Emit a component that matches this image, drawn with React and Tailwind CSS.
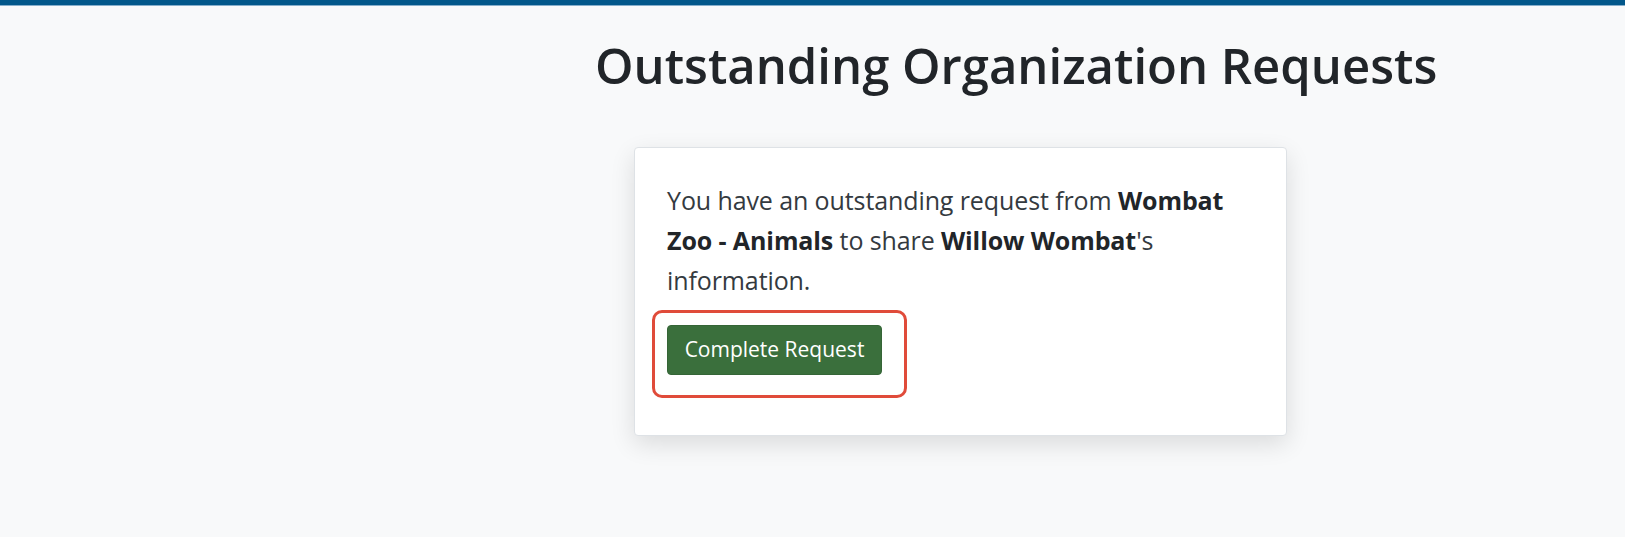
import React from 'react';

const App = () => {
    return (
        <div className="min-h-[537px] bg-[#f8f9fa] font-['Open_Sans',sans-serif] text-[#212529]">
            <div className="h-[5px] bg-[#02578a]" />
            <div className="h-px bg-[#86aecb]" />
            <div className="pl-[595px] pt-[30px]">
                <h1 className="text-[49px] leading-[1.2] font-semibold tracking-[0px]">
                    Outstanding Organization Requests
                </h1>
            </div>
            <div className="pl-[634px] pt-[52px]">
                <div className="w-[653px] bg-white border border-[#dee2e6] rounded-[4px] shadow-[0_8px_24px_rgba(0,0,0,0.12)] px-[32px] pt-[32px] pb-[60px]">
                    <p className="text-[25px] leading-[40px] text-[#343a40] tracking-[-0.1px]">
                        You have an outstanding request from <b className="font-bold text-[#212529]">Wombat Zoo - Animals</b> to share <b className="font-bold text-[#212529]">Willow Wombat</b>'s information.
                    </p>
                    <div className="mt-[25px] relative inline-block">
                        <button className="h-[50px] w-[215px] bg-[#3a6f3c] text-white text-[21px] tracking-[0px] rounded-[4px] border border-[#356537]">
                            Complete Request
                        </button>
                        <span className="absolute -left-[15px] -top-[15px] w-[255px] h-[88px] border-[3px] border-[#e04b3a] rounded-[10px] pointer-events-none" />
                    </div>
                </div>
            </div>
        </div>
    );
};

export default App;
